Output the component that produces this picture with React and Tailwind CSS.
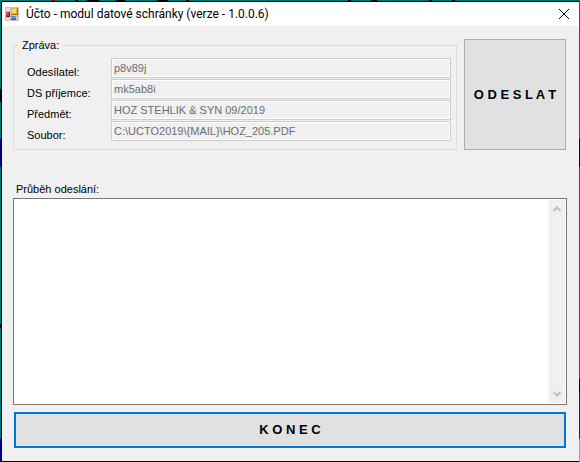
import React, { useState } from 'react';

const fields = [
  { id: 'sender', label: 'Odesílatel:', value: 'p8v89j' },
  { id: 'recipient', label: 'DS příjemce:', value: 'mk5ab8i' },
  { id: 'subject', label: 'Předmět:', value: 'HOZ STEHLIK & SYN 09/2019' },
  { id: 'file', label: 'Soubor:', value: 'C:\\UCTO2019\\{MAIL}\\HOZ_205.PDF' },
];

const AppIcon = () => (
  <svg width="14" height="14" viewBox="0 0 14 14" shapeRendering="crispEdges" aria-hidden="true">
    <rect width="14" height="14" fill="#c6c6c6" />
    <rect x="1" y="5" width="4" height="5" fill="#8e1313" />
    <rect x="1" y="5" width="3" height="4" fill="#d43a2a" />
    <rect x="2" y="6" width="1" height="1" fill="#f08a70" />
    <rect x="6" y="1" width="7" height="7" fill="#a87400" />
    <rect x="6" y="1" width="6" height="6" fill="#f2b51d" />
    <rect x="7" y="2" width="4" height="4" fill="#ffdc6e" />
    <rect x="6" y="9" width="5" height="4" fill="#2a5bb8" />
    <rect x="6" y="9" width="5" height="3" fill="#5590e8" />
    <rect x="1" y="1" width="4" height="3" fill="#dedede" />
    <rect x="1" y="11" width="4" height="2" fill="#dedede" />
  </svg>
);

const TitleBar = () => (
  <header className="flex h-6 shrink-0 items-center bg-white pl-[3px] pr-[10px]">
    <AppIcon />
    <h1 className="ml-[7px] flex-1 whitespace-nowrap font-['Roboto',sans-serif] text-[12px] leading-4 text-black">
      Účto - modul datové schránky (verze - 1.0.0.6)
    </h1>
    <button type="button" aria-label="Zavřít" className="text-black">
      <svg width="10" height="10" viewBox="0 0 10 10" stroke="currentColor" fill="none">
        <path d="M0 0L10 10M10 0L0 10" />
      </svg>
    </button>
  </header>
);

const Scrollbar = () => (
  <div className="flex w-4 shrink-0 flex-col items-center justify-between bg-[#f0f0f0] py-[6px]" aria-hidden="true">
    <svg width="8" height="6" viewBox="0 0 8 6" fill="none" stroke="#bfbfbf" strokeWidth="2">
      <path d="M0.5 5L4 1.5L7.5 5" />
    </svg>
    <svg width="8" height="6" viewBox="0 0 8 6" fill="none" stroke="#bfbfbf" strokeWidth="2">
      <path d="M0.5 1L4 4.5L7.5 1" />
    </svg>
  </div>
);

const App = () => {
  const [log, setLog] = useState('');

  return (
    <div className="flex min-h-screen flex-col font-['Liberation_Sans',Arial,sans-serif] text-[11px] leading-4 text-black">
      {/* slivers of the desktop program behind the dialog */}
      <div className="h-px shrink-0 bg-[linear-gradient(90deg,#007878_0_9%,#700_9%_9.5%,#007878_9.5%_13%,#000_13%_13.5%,#007878_13.5%_15%,#000_15%_17%,#007878_17%_20%,#000_20%_21.5%,#007878_21.5%_27%,#000_27%_29%,#007878_29%_32%,#000_32%_32.6%,#007878_32.6%_60%,#000_60%_60.5%,#007878_60.5%_64%,#000_64%_65%,#007878_65%_74%,#000_74%_74.5%,#007878_74.5%_78%,#000_78%_78.5%,#007878_78.5%)]" />
      <div className="flex flex-1">
        <div className="w-px bg-[linear-gradient(#007878_0_19%,#000_19%_22%,#007878_22%_30%,#000080_30%_36%,#007878_36%_70%,#000_70%_71%,#007878_71%_95%,#000080_95%)]" />
        <div className="flex min-w-0 flex-1 flex-col border-y border-l border-black bg-[#f0f0f0]">
          <TitleBar />

          <main className="flex flex-1 flex-col pb-[13px] pl-[11px] pr-3 pt-[13px]">
            <div className="mr-px flex gap-[7px]">
              <fieldset className="-mt-[2px] min-w-0 flex-1 border border-[#dcdcdc] pb-2 pl-[13px] pr-[5px]">
                <legend className="-ml-2 px-[3px]">Zpráva:</legend>
                <div className="flex flex-col gap-px pt-[5px]">
                  {fields.map(({ id, label, value }) => (
                    <div key={id} className="flex">
                      <label htmlFor={id} className="w-[84px] shrink-0 pt-2 leading-3">{label}</label>
                      <input
                        id={id}
                        value={value}
                        disabled
                        readOnly
                        className="h-5 min-w-0 flex-1 border border-[#cccccc] bg-[#f0f0f0] pb-px pl-[2px] text-[#6d6d6d] shadow-[inset_0_0_0_1px_#fff]"
                      />
                    </div>
                  ))}
                </div>
              </fieldset>
              <button type="button" className="w-[102px] shrink-0 border border-[#adadad] bg-[#e1e1e1] text-[13px] font-bold">
                O D E S L A T
              </button>
            </div>

            <label htmlFor="log" className="mt-[31px] pl-[3px]">Průběh odeslání:</label>
            <div className="mt-px flex flex-1 border border-[#7a7a7a] bg-white p-px">
              <textarea
                id="log"
                value={log}
                onChange={(e) => setLog(e.target.value)}
                className="min-w-0 flex-1 resize-none p-1 outline-none"
              />
              <Scrollbar />
            </div>
            <button type="button" className="mx-px mt-[7px] h-9 border-2 border-[#0078d7] bg-[#e1e1e1] text-[13px] font-bold">
              K O N E C
            </button>
          </main>
        </div>
        <div className="w-px bg-[linear-gradient(#007070_0_30%,#000060_30%_36%,#007070_36%_82%,#000_82%_85%,#003838_85%_95%,#a8a850_95%)]" />
      </div>
    </div>
  );
};

export default App;
